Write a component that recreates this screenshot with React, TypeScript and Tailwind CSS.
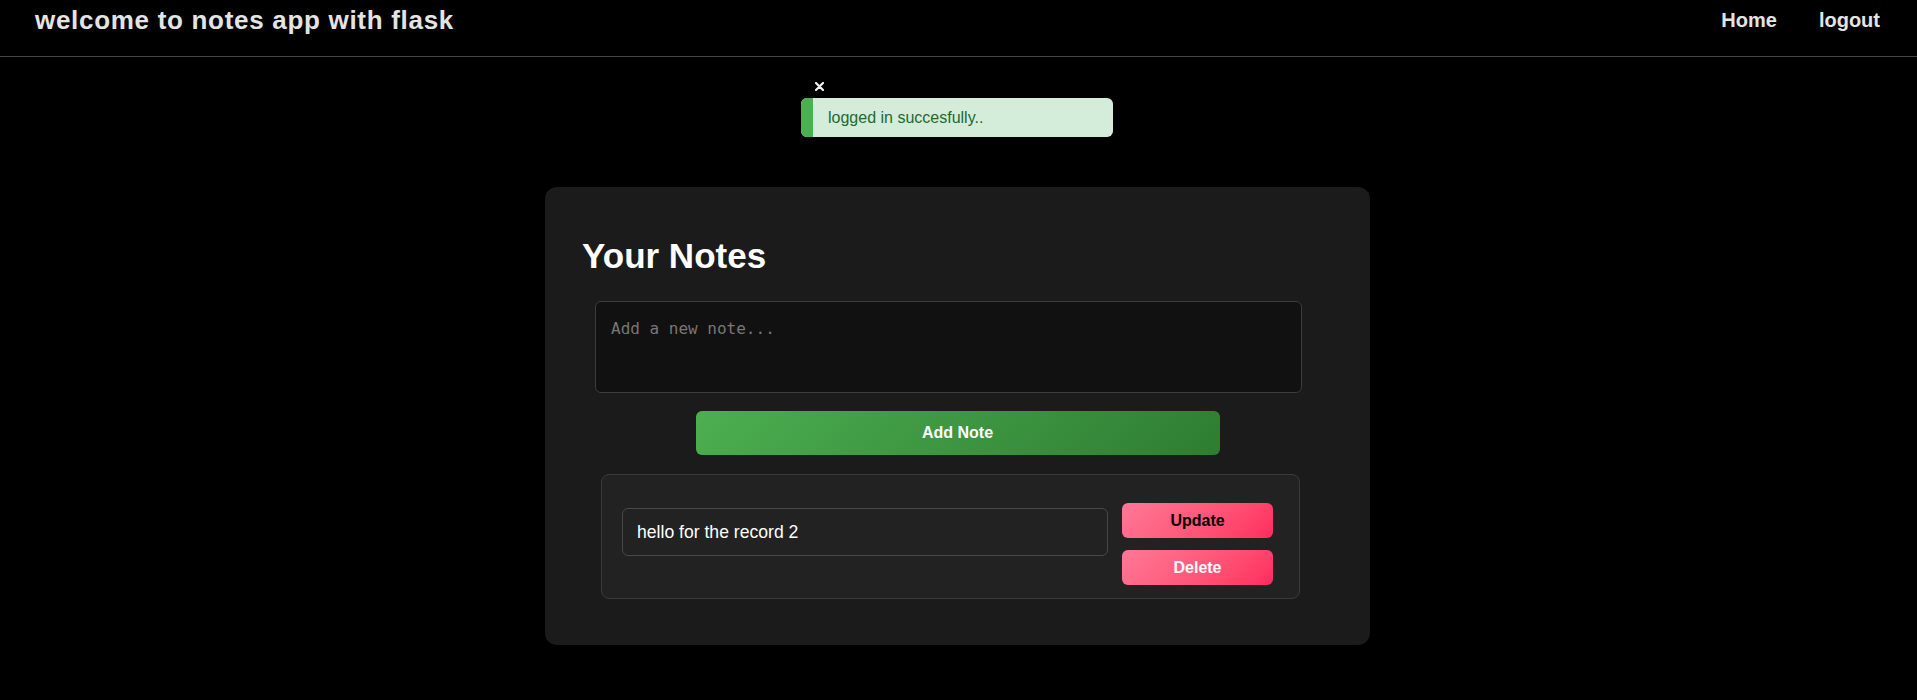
import React from 'react';

const sans = { fontFamily: '"Liberation Sans", Arial, sans-serif' };

const Header: React.FC = () => (
  <header className="h-[57px] flex items-start justify-between border-b border-[#444] pl-[35px] pr-[37px]">
    <h1 className="mt-[6px] text-[26px] leading-[29px] font-bold tracking-[0.7px] text-[#e4e4e4]">
      welcome to notes app with flask
    </h1>
    <nav className="mt-[8px] flex gap-[42px] text-[20px] leading-[24px] font-bold text-[#e4e4e4]">
      <a href="#">Home</a>
      <a href="#">logout</a>
    </nav>
  </header>
);

const Flash: React.FC = () => (
  <div className="flex justify-center mt-[25px] pr-[3px]">
    <div className="w-[312px] flex flex-col">
      <button className="ml-[14px] w-[9px] h-[9px] block">
        <svg width="9" height="9" viewBox="0 0 9 9">
          <path d="M1 1 L8 8 M8 1 L1 8" stroke="#f2f2f2" strokeWidth="2.2" strokeLinecap="round" />
        </svg>
      </button>
      <div className="mt-[7px] flex rounded-[6px] overflow-hidden bg-[#d4edda]">
        <div className="w-[12px] bg-[#4caf50]" />
        <p className="pl-[15px] py-[10px] text-[16px] leading-[19px] text-[#22692f]">logged in succesfully..</p>
      </div>
    </div>
  </div>
);

const NoteItem: React.FC<{ text: string }> = ({ text }) => (
  <div className="ml-[56px] w-[699px] h-[125px] rounded-[8px] border border-[#3a3a3a] bg-[#222] flex items-start gap-[14px] pl-[20px] pr-[26px] pt-[28px]">
    <input
      readOnly
      value={text}
      className="flex-1 mt-[5px] h-[48px] rounded-[6px] border border-[#484848] bg-[#222] pl-[14px] text-[17.6px] text-white outline-none"
      style={sans}
    />
    <div className="w-[151px] flex flex-col gap-[12px]">
      <button className="h-[35px] rounded-[6px] bg-linear-135 from-[#ff7897] to-[#ff2b5e] text-[16px] font-bold text-black">
        Update
      </button>
      <button className="h-[35px] rounded-[6px] bg-linear-135 from-[#ff7897] to-[#ff2b5e] text-[16px] font-bold text-white">
        Delete
      </button>
    </div>
  </div>
);

export default function App() {
  return (
    <div className="min-h-[700px] bg-black" style={sans}>
      <Header />
      <Flash />

      <main className="flex justify-center mt-[50px] pr-[2px]">
        <section className="w-[825px] rounded-[12px] bg-[#1b1b1b] pt-[52px] pb-[46px] flex flex-col">
          <h2 className="ml-[37px] text-[35px] leading-[34px] font-bold text-white">Your Notes</h2>

          <textarea
            placeholder="Add a new note..."
            className="ml-[50px] mt-[28px] w-[707px] h-[92px] resize-none rounded-[6px] border border-[#3d3d3d] bg-[#111] p-[15px] text-[16px] text-[#ddd] placeholder:text-[#777] outline-none"
            style={{ fontFamily: '"DejaVu Sans Mono", "Liberation Mono", monospace' }}
          />

          <button className="mx-auto mt-[18px] w-[524px] h-[44px] rounded-[6px] bg-linear-135 from-[#4caf50] to-[#2e7d32] text-[16px] font-bold text-white">
            Add Note
          </button>

          <div className="mt-[19px]">
            <NoteItem text="hello for the record 2" />
          </div>
        </section>
      </main>
    </div>
  );
}
